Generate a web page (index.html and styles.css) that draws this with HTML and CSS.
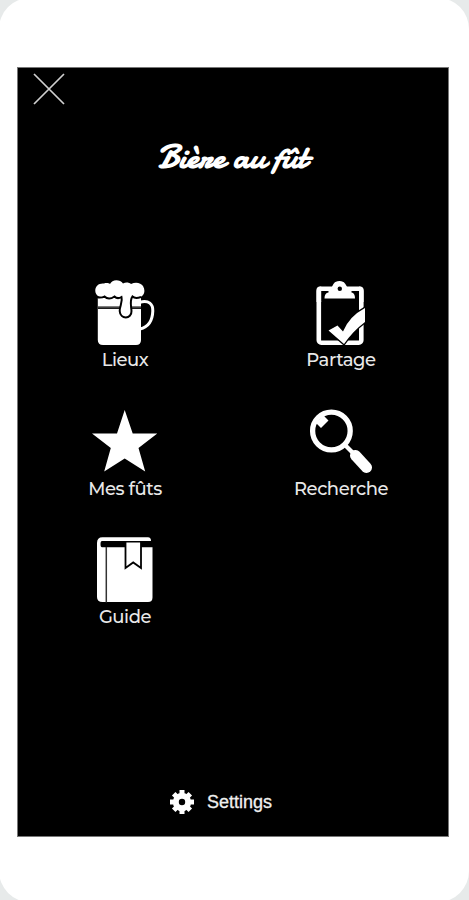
FILE: index.html
```
<!DOCTYPE html>
<html lang="fr">
<head>
    <meta charset="UTF-8">
    <meta name="viewport" content="width=device-width, initial-scale=1.0">
    <title>Bière au fût</title>
    <link rel="stylesheet" href="styles.css">
</head>
<body>
    <div class="phone">
        <main class="screen">
            <button class="close-btn" aria-label="Fermer">
                <svg viewBox="0 0 32 32" width="32" height="32">
                    <path d="M1 1L31 31M31 1L1 31" fill="none" stroke="#d0d0d0" stroke-width="1.7"/>
                </svg>
            </button>

            <h1 class="title">Bière au fût</h1>

            <nav class="menu">
                <a class="menu-item">
                    <svg viewBox="0 0 70 66" width="70" height="66">
                        <path d="M50 22.2C59 20 63 24 62.8 31C62.5 40 59 47 50 49" fill="none" stroke="#fff" stroke-width="3"/>
                        <path d="M7.8 18H51V60Q51 65 46 65H13Q7.8 65 7.8 60Z" fill="#fff"/>
                        <path d="M8 27.8H51" stroke="#000" stroke-width="2.6"/>
                        <path d="M8 27.8H51" stroke="#777" stroke-width=".8"/>
                        <path d="M5.3 11C5 6 9 2.8 14 3.5C17 2.6 19 3.5 20 4C22-1 30-1 33 3.5C36 2 39 2.5 41 4C46 1.5 51 3 53 6C56 11 54 17 48.5 17.5C46 18 44 17 43 16.5C40.5 20 42 25 42 30C42 40 29.5 40 29.5 31C29.5 26 32.5 22 31 17C28 18.5 26 18 24.5 16.5C20 20 16 18 14.5 16.5C9 18 5.5 15 5.3 11Z" fill="#fff"/>
                        <path d="M7.8 17.5Q12 18 14.5 16.5C17 19 21 19 24.5 16.5C26 18 29 18.5 31.5 17C33 22 29.5 26 29.7 31C30 39.5 41.8 39.5 41.5 31C41 25 39.5 20 42.5 16.5C44.5 18.5 48 18 51 17" fill="none" stroke="#000" stroke-width="2"/>
                    </svg>
                    <span class="label">Lieux</span>
                </a>
                <a class="menu-item">
                    <svg viewBox="0 0 70 66" width="70" height="66">
                        <rect x="12.8" y="8.7" width="42.5" height="54" rx="2.5" fill="none" stroke="#fff" stroke-width="4.6"/>
                        <path d="M15.2 5H53V21H15.2Z" fill="#000"/>
                        <path d="M10.5 12V10Q10.5 6.4 14 6.4H26C27.5 5 27.5 1 33.5 1C39 1 39.5 5 41 6.4H54Q57.6 6.4 57.6 10V22H53V11H45.5V12.5Q49 13 49 18.5H18.5Q18.5 13 22.5 12.5V11H15.2V22H10.5Z" fill="#fff"/>
                        <circle cx="33.8" cy="8.7" r="2.2" fill="#000"/>
                        <path d="M22.5 50.5L31.5 45.5L37 51.5Q43 36.5 59 28V42Q47 51 38 64Z" fill="#fff" stroke="#000" stroke-width="2.6" paint-order="stroke"/>
                    </svg>
                    <span class="label">Partage</span>
                </a>
                <a class="menu-item">
                    <svg viewBox="0 0 70 66" width="70" height="66">
                        <path d="M34.7 1L42.7 24.5H67.3L48.5 39L55.2 62.6L34.7 49.6L14.2 62.6L20.8 39L2 24.5H27Z" fill="#fff"/>
                    </svg>
                    <span class="label">Mes fûts</span>
                </a>
                <a class="menu-item">
                    <svg viewBox="0 0 70 66" width="70" height="66">
                        <circle cx="25.4" cy="22" r="18.8" fill="none" stroke="#fff" stroke-width="5.3"/>
                        <path d="M38 35L47 44" stroke="#fff" stroke-width="4.2"/>
                        <path d="M49.5 46.5L60.5 58.5" stroke="#fff" stroke-width="11" stroke-linecap="round"/>
                        <path d="M12.5 16.5L20 9" stroke="#fff" stroke-width="7"/>
                    </svg>
                    <span class="label">Recherche</span>
                </a>
                <a class="menu-item">
                    <svg viewBox="0 0 70 66" width="70" height="66">
                        <path d="M12.5 .3H58Q61 .3 61 4H12Q10.5 4 10.5 7Q10.5 10.2 12 10.2H62.5V60.5Q62.5 65 58 65H12.5Q7 65 7 60V6Q7 .3 12.5 .3Z" fill="#fff"/>
                        <path d="M16.3 10V65.5" stroke="#333" stroke-width="1.5"/>
                        <path d="M35.5 5.5H51V31.2L43 25.2L35.5 31.2Z" fill="#fff"/>
                        <path d="M35.5 5V31L43.2 25.4L51 31V5" fill="none" stroke="#000" stroke-width="1.8"/>
                    </svg>
                    <span class="label">Guide</span>
                </a>
            </nav>

            <a class="settings">
                <svg viewBox="-12 -12 24 24" width="24" height="24">
                    <circle r="6.2" fill="none" stroke="#fff" stroke-width="6"/>
                    <path d="M0-12V-7M0 7V12M-12 0H-7M7 0H12M-8.3-8.3L-5-5M5 5L8.3 8.3M-8.3 8.3L-5 5M5-5L8.3-8.3" fill="none" stroke="#fff" stroke-width="5"/>
                </svg>
                <span class="settings-label">Settings</span>
            </a>
        </main>
    </div>
</body>
</html>
```
FILE: styles.css
```
* {
    box-sizing: border-box;
}

body {
    margin: 0;
    background: #e7eaea;
    overflow: hidden;
}

.phone {
    height: 904px;
    margin: -2px 0 -2px -1px;
    padding: 69px 20px 65px 18px;
    background: #fff;
    border-radius: 31px;
}

.screen {
    display: flex;
    flex-direction: column;
    height: 770px;
    color: #fff;
    background: #000;
    outline: 1px solid #777;
    outline-offset: -1px;
}

.close-btn {
    width: 32px;
    height: 32px;
    margin: 6px 0 0 16px;
    padding: 0;
    border: none;
    background: none;
    cursor: pointer;
}

.close-btn svg {
    display: block;
}

.title {
    height: 40px;
    margin: 32px 2px 0 0;
    font-family: "Damion", "Lato", cursive;
    font-size: 34.5px;
    font-weight: 700;
    line-height: 40px;
    text-align: center;
    white-space: nowrap;
}

.menu {
    display: grid;
    grid-template-columns: 1fr 1fr;
    grid-auto-rows: 128.5px;
    margin-top: 103px;
}

.menu-item {
    display: flex;
    flex-direction: column;
    align-items: center;
}

.label {
    color: #e8e8e8;
    font-family: "Montserrat", "Inter", sans-serif;
    font-size: 18px;
    font-weight: 500;
    line-height: 29px;
    letter-spacing: -.45px;
}

.settings {
    display: flex;
    align-items: center;
    justify-content: center;
    gap: 13px;
    margin: auto 0 23px -24px;
    font-family: "Liberation Sans", Arial, sans-serif;
    font-size: 18px;
    line-height: 24px;
}

.settings-label {
    color: #f0f0f0;
    -webkit-text-stroke: .3px #f0f0f0;
}
```
